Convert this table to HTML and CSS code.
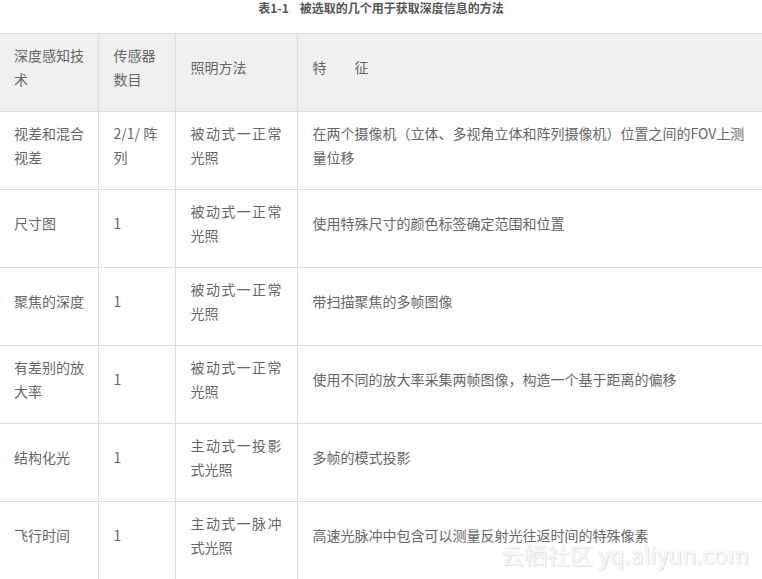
FILE: index.html
```html
<!DOCTYPE html>
<html lang="zh-CN">
<head>
<meta charset="utf-8">
<title>表1-1 被选取的几个用于获取深度信息的方法</title>
<link rel="stylesheet" href="styles.css">
</head>
<body>
<div class="page">
  <p class="caption">表1-1&nbsp;&nbsp;&nbsp;&nbsp;被选取的几个用于获取深度信息的方法</p>
  <table class="depth-table">
    <colgroup>
      <col class="w1"><col class="w2"><col class="w3"><col class="w4">
    </colgroup>
    <thead>
      <tr>
        <th class="c1">深度感知技术</th>
        <th>传感器数目</th>
        <th class="c3">照明方法</th>
        <th class="c4">特　　征</th>
      </tr>
    </thead>
    <tbody>
      <tr>
        <td class="c1">视差和混合视差</td>
        <td>2/1/ 阵列</td>
        <td class="c3">被动式一正常光照</td>
        <td class="c4">在两个摄像机（立体、多视角立体和阵列摄像机）位置之间的FOV上测量位移</td>
      </tr>
      <tr>
        <td class="c1">尺寸图</td>
        <td>1</td>
        <td class="c3">被动式一正常光照</td>
        <td class="c4">使用特殊尺寸的颜色标签确定范围和位置</td>
      </tr>
      <tr>
        <td class="c1">聚焦的深度</td>
        <td>1</td>
        <td class="c3">被动式一正常光照</td>
        <td class="c4">带扫描聚焦的多帧图像</td>
      </tr>
      <tr>
        <td class="c1">有差别的放大率</td>
        <td>1</td>
        <td class="c3">被动式一正常光照</td>
        <td class="c4">使用不同的放大率采集两帧图像，构造一个基于距离的偏移</td>
      </tr>
      <tr>
        <td class="c1">结构化光</td>
        <td>1</td>
        <td class="c3">主动式一投影式光照</td>
        <td class="c4">多帧的模式投影</td>
      </tr>
      <tr>
        <td class="c1">飞行时间</td>
        <td>1</td>
        <td class="c3">主动式一脉冲式光照</td>
        <td class="c4">高速光脉冲中包含可以测量反射光往返时间的特殊像素</td>
      </tr>
    </tbody>
  </table>
  <div class="watermark">云栖社区 yq.aliyun.com</div>
</div>
</body>
</html>
```

FILE: styles.css
```css
html, body {
  margin: 0;
  padding: 0;
  background: #fff;
}

.page {
  position: relative;
  width: 762px;
  height: 579px;
  overflow: hidden;
  font-family: "Noto Sans CJK SC", "Noto Sans", sans-serif;
  color: #666;
}

.caption {
  margin: 0;
  height: 33px;
  line-height: 15px;
  text-align: center;
  font-size: 12px;
  font-weight: bold;
  color: #555;
}

.depth-table {
  width: 762px;
  table-layout: fixed;
  border-collapse: collapse;
  font-size: 14px;
  line-height: 24px;
}

.w1 { width: 98px; }
.w2 { width: 77px; }
.w3 { width: 122px; }
.w4 { width: 465px; }

.depth-table th,
.depth-table td {
  height: 48px;
  padding: 9px 15px 20px 15px;
  border: 1px solid #ddd;
  text-align: left;
  vertical-align: middle;
  font-weight: normal;
  color: #666;
}

.depth-table thead th {
  background: #f0f0f0;
}

.depth-table tr > :first-child {
  border-left: none;
}

.depth-table .c1 {
  padding-left: 14px;
  padding-right: 8px;
}

.depth-table .c3 {
  text-align: justify;
  text-align-last: left;
}

.depth-table .c4 {
  padding-right: 8px;
}

.watermark {
  position: absolute;
  left: 501px;
  top: 541px;
  font-size: 23px;
  line-height: 27px;
  white-space: nowrap;
  color: rgba(255, 255, 255, 0.95);
  text-shadow: 0 0 1px rgba(0, 0, 0, 0.22), 1px 1px 1px rgba(0, 0, 0, 0.1);
}
```
